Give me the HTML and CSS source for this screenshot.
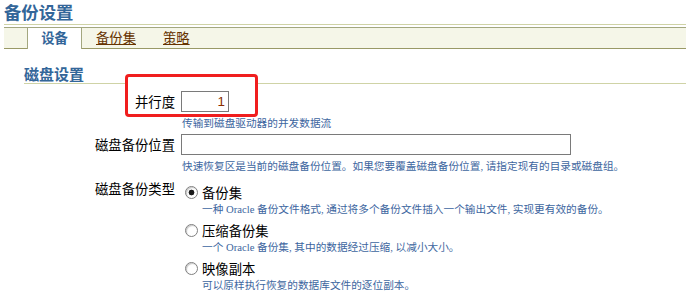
FILE: index.html
```html
<!DOCTYPE html>
<html lang="zh-CN">
<head>
    <meta charset="UTF-8">
    <title>备份设置</title>
    <link rel="stylesheet" href="styles.css">
</head>
<body>
    <!-- Page Header -->
    <h1 class="page-title">备份设置</h1>

    <!-- Tabs -->
    <div class="tabs">
        <span class="tab-lead"></span>
        <span class="tab active">设备</span>
        <a class="tab" href="#">备份集</a>
        <a class="tab" href="#">策略</a>
    </div>

    <!-- Disk Settings -->
    <div class="section">
        <h2 class="section-title">磁盘设置</h2>
        <div class="form">
            <label class="form-label" for="parallel">并行度</label>
            <div class="form-field">
                <input class="text-input short" id="parallel" type="text" value="1">
                <div class="hint">传输到磁盘驱动器的并发数据流</div>
            </div>

            <label class="form-label" for="location">磁盘备份位置</label>
            <div class="form-field">
                <input class="text-input long" id="location" type="text">
                <div class="hint">快速恢复区是当前的磁盘备份位置。如果您要覆盖磁盘备份位置, 请指定现有的目录或磁盘组。</div>
            </div>

            <label class="form-label type-label">磁盘备份类型</label>
            <div class="form-field options">
                <div class="option">
                    <label class="option-row"><input class="radio" type="radio" name="type" checked>备份集</label>
                    <div class="hint option-hint">一种 Oracle 备份文件格式, 通过将多个备份文件插入一个输出文件, 实现更有效的备份。</div>
                </div>
                <div class="option">
                    <label class="option-row"><input class="radio" type="radio" name="type">压缩备份集</label>
                    <div class="hint option-hint">一个 Oracle 备份集, 其中的数据经过压缩, 以减小大小。</div>
                </div>
                <div class="option">
                    <label class="option-row"><input class="radio" type="radio" name="type">映像副本</label>
                    <div class="hint option-hint">可以原样执行恢复的数据库文件的逐位副本。</div>
                </div>
            </div>
        </div>
    </div>

    <!-- Annotation box -->
    <div class="highlight"></div>
</body>
</html>
```

FILE: styles.css
```css
/* General Styles */
body {
    font-family: "Noto Sans CJK SC", sans-serif;
    background-color: #ffffff;
    color: #000000;
    margin: 0;
    padding: 0;
    position: relative;
}

/* Page Header */
.page-title {
    margin: 0 0 0 4px;
    font-size: 17.33px;
    font-weight: bold;
    line-height: 24px;
    color: #336699;
    border-bottom: 1px solid #cfd3a6;
}

/* Tabs */
.tabs {
    display: flex;
    margin: 2px 0 0 4px;
    background-color: #f5f6e8;
    border-top: 1px solid #a3a77f;
    border-bottom: 1px solid #999966;
    font-size: 13.33px;
    line-height: 20px;
}

.tab-lead {
    width: 23px;
    border-bottom-right-radius: 3px;
}

.tab {
    padding: 0 13px 0 14px;
    color: #663300;
    text-decoration: underline;
}

.tab.active {
    width: 53px;
    padding: 0 0 1px 0;
    margin-bottom: -1px;
    text-align: center;
    font-weight: bold;
    text-decoration: none;
    color: #336699;
    background-color: #ffffff;
    border-left: 1px solid #a3a77f;
    border-right: 1px solid #a3a77f;
}

/* Section */
.section {
    margin: 16px 0 0 24px;
}

.section-title {
    margin: 0;
    font-size: 15px;
    font-weight: bold;
    line-height: 18px;
    color: #336699;
    border-bottom: 1px solid #cfd3a6;
}

/* Form */
.form {
    display: grid;
    grid-template-columns: 151px 1fr;
    column-gap: 6px;
    row-gap: 4px;
    margin-top: 7px;
    position: relative;
    z-index: 1;
}

.form-label {
    text-align: right;
    font-size: 13.33px;
    line-height: 17px;
    padding-top: 2px;
}

.type-label {
    padding-top: 3px;
}

.text-input {
    box-sizing: border-box;
    height: 21px;
    margin: 0;
    padding: 0 3px;
    border: 1px solid #7a7a7a;
    font-family: "Liberation Sans", sans-serif;
    font-size: 13.33px;
    color: #8a2c00;
    outline: none;
    display: block;
}

.text-input.short {
    width: 48px;
    text-align: right;
}

.text-input.long {
    width: 390px;
}

.hint {
    margin: 4px 0 0 1px;
    font-family: "Liberation Serif", "Noto Sans CJK SC", serif;
    font-size: 10.67px;
    line-height: 14px;
    color: #3d66a0;
    white-space: nowrap;
}

/* Radio options */
.options {
    padding-top: 7px;
}

.option {
    margin-bottom: 6px;
}

.option-row {
    display: flex;
    align-items: center;
    font-size: 13.33px;
    line-height: 17px;
}

.radio {
    appearance: none;
    width: 13px;
    height: 13px;
    margin: 0 4px 0 4px;
    border: 1px solid #808080;
    border-radius: 50%;
    background-color: #ffffff;
    box-shadow: inset 1px 1px 1px #c8c8c8;
}

.radio:checked {
    background: radial-gradient(circle, #1a1a1a 0, #1a1a1a 2.6px, #ffffff 3.2px);
}

.option-hint {
    margin: 1px 0 0 21px;
}

/* Annotation box */
.highlight {
    position: absolute;
    left: 125px;
    top: 74px;
    width: 133px;
    height: 43px;
    box-sizing: border-box;
    border: 3px solid #f01e1e;
    border-radius: 4px;
    background-color: #ffffff;
}
```
